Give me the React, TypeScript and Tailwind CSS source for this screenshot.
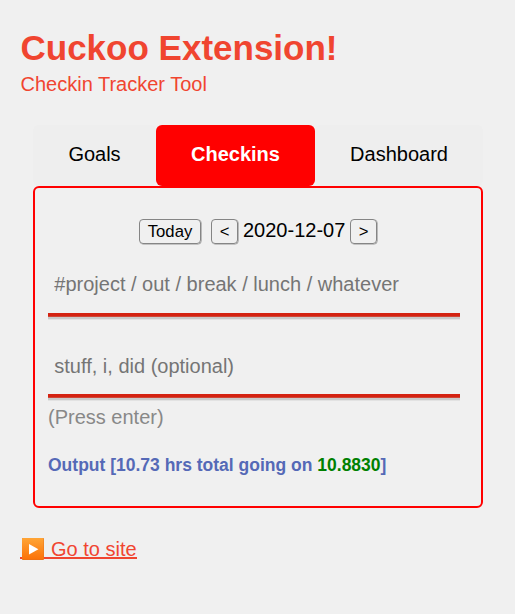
import React from "react";

function SmallButton({ children, className }: { children: React.ReactNode; className: string }) {
  return (
    <button
      className={`h-[25px] shrink-0 rounded-[4px] border border-[#858585] text-center text-[16.7px] leading-[24px] text-black shadow-[0.6px_0.6px_0_#959595] ${className}`}
    >
      {children}
    </button>
  );
}

function Field({ placeholder, className }: { placeholder: string; className: string }) {
  return (
    <div className={`w-[412px] ${className}`}>
      <input
        placeholder={placeholder}
        className="block h-[24px] w-full bg-transparent px-[6.3px] text-[20px] leading-[24px] outline-none placeholder:text-[#757575]"
      />
      <div className="h-[3px] bg-[#d42211]" />
      <div className="h-px bg-[#cf4536]" />
      <div className="h-[2px] bg-[#c9c9c9]" />
      <div className="h-px bg-[#e2e2e2]" />
    </div>
  );
}

function PlayIcon() {
  return (
    <svg width="24" height="24" viewBox="0 0 24 24" className="shrink-0">
      <defs>
        <linearGradient id="orange" x1="0" y1="0" x2="0" y2="1">
          <stop offset="0" stopColor="#ffa536" />
          <stop offset="1" stopColor="#fb7208" />
        </linearGradient>
      </defs>
      <rect x="2" y="1" width="22" height="22" rx="1" fill="#e2701c" />
      <rect x="2" y="1" width="21.6" height="21.4" rx="1" fill="url(#orange)" />
      <path d="M9 6.9v10.6l9.4-5.3z" fill="#fff" />
    </svg>
  );
}

export default function App() {
  return (
    <main className="h-[614px] w-[515px] overflow-hidden bg-[#f0f0f0] pt-[28px] font-['Liberation_Sans',Arial,sans-serif] text-[20px]">
      <header className="pl-[20.5px] text-[#f04530]">
        <h1 className="text-[35px] leading-[40px] font-bold whitespace-nowrap">Cuckoo Extension!</h1>
        <p className="mt-[4px] leading-[24px]">Checkin Tracker Tool</p>
      </header>
      <section className="mt-[29px] ml-[33px] w-[450px]">
        <nav className="flex h-[61px] leading-[24px]">
          <button className="w-[123px] rounded-[6px] bg-[#eeeeee] pb-[4px] text-black">Goals</button>
          <button className="w-[159px] rounded-[6px] bg-[#ff0000] pb-[4px] font-bold text-white">Checkins</button>
          <button className="w-[168px] rounded-[6px] bg-[#eeeeee] pb-[4px] text-black">Dashboard</button>
        </nav>
        <div className="h-[322px] rounded-[6px] border-2 border-[#ff0000] pt-[31px] pl-[13px]">
          <div className="flex h-[26px] pl-[91px] whitespace-nowrap">
            <SmallButton className="w-[62px]">Today</SmallButton>
            <SmallButton className="ml-[10px] w-[27px]">&lt;</SmallButton>
            <span className="ml-[5px] w-[107px] leading-[22px]">2020-12-07</span>
            <SmallButton className="w-[27px]">&gt;</SmallButton>
          </div>
          <Field placeholder="#project / out / break / lunch / whatever" className="mt-[27px] [&>input]:mb-[17px]" />
          <Field placeholder="stuff, i, did (optional)" className="mt-[34px] [&>input]:mb-[16px]" />
          <p className="mt-[4px] leading-[24px] text-[#888888]">(Press enter)</p>
          <p className="mt-[24px] text-[17.5px] leading-[24px] font-bold whitespace-nowrap text-[#5569b7]">
            Output [10.73 hrs total going on <span className="text-[#008000]">10.8830</span>]
          </p>
        </div>
      </section>
      <a className="mt-[29px] ml-[20px] flex h-[24px] w-[117px] bg-[linear-gradient(#f04530,#f04530)] bg-[length:100%_2px] bg-[position:0_20px] bg-no-repeat leading-[24px] whitespace-nowrap text-[#f04530]">
        <PlayIcon />
        <span className="ml-[7px]">Go to site</span>
      </a>
    </main>
  );
}
